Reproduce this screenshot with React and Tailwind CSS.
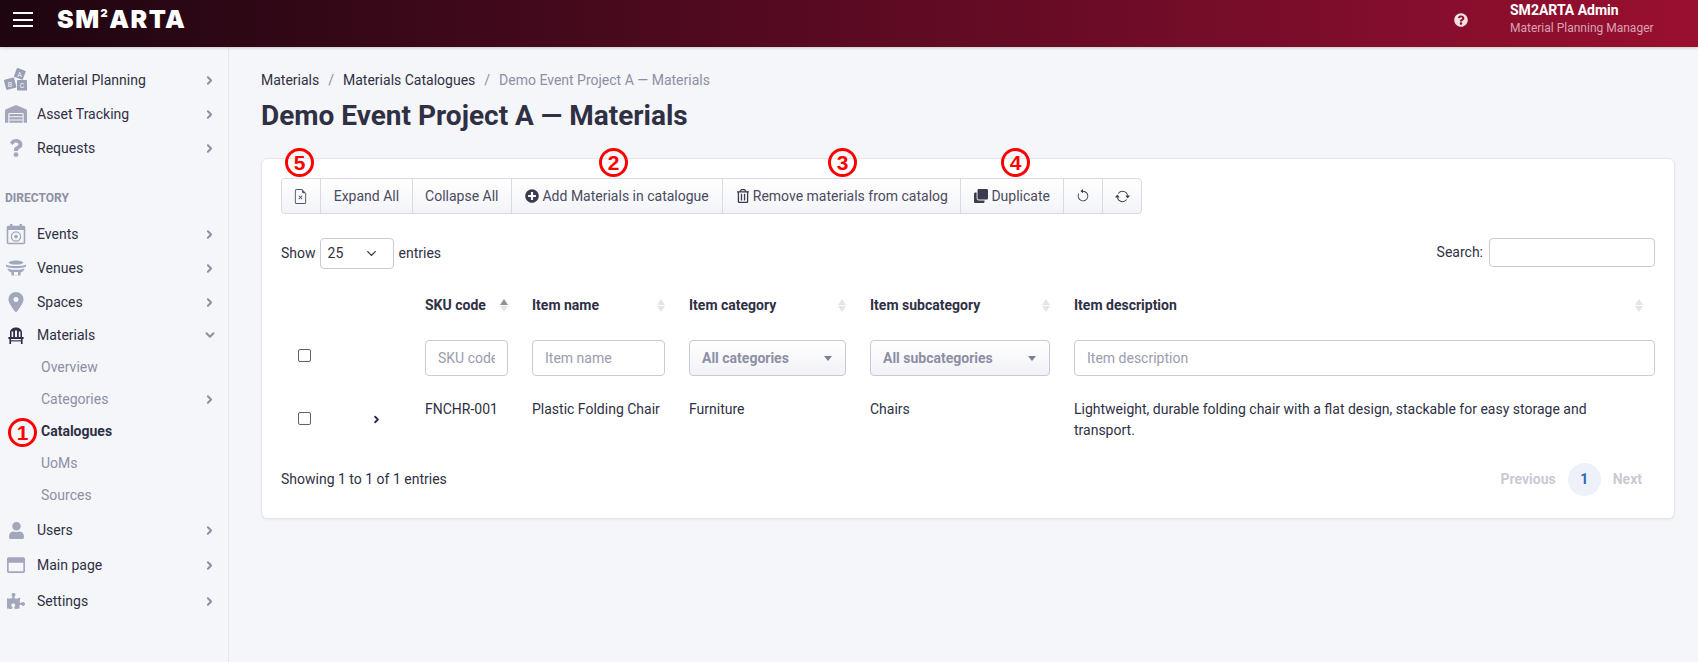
import React from "react";
import { ChevronRight, ChevronDown } from "lucide-react";
import { FaWarehouse, FaQuestion, FaUser, FaPuzzlePiece, FaRegWindowMaximize, FaPlusCircle, FaRegTrashAlt, FaClone, FaQuestionCircle } from "react-icons/fa";
import { FaLocationDot } from "react-icons/fa6";
import { BsFileEarmarkX, BsArrowCounterclockwise, BsArrowRepeat } from "react-icons/bs";

const BlocksIcon = () => (
  <svg width="24" height="24" viewBox="0 0 24 24">
    <g fill="#9b9fb4">
      <rect x="11" y="1" width="9.500" height="9.500" rx="1" transform="rotate(20 15.500 6)" />
      <rect x="1" y="10.500" width="10.500" height="10.500" rx="1" transform="rotate(-15 6 16)" />
      <rect x="13" y="12" width="10" height="10.500" rx="0.500" />
    </g>
    <g fill="#f5f6f9" fontSize="7" fontFamily="Roboto, sans-serif" textAnchor="middle">
      <text x="15.500" y="8.500">A</text>
      <text x="6" y="18.500">B</text>
      <text x="18" y="19.800">C</text>
    </g>
  </svg>
);

const CalendarIcon = () => (
  <svg width="20" height="22" viewBox="0 0 20 22" fill="none">
    <rect x="1.500" y="3.500" width="17" height="17" rx="1" stroke="#a3a7bb" strokeWidth="1.600" />
    <rect x="1" y="3" width="18" height="4" fill="#a3a7bb" />
    <rect x="4" y="1" width="2.400" height="4" fill="#a3a7bb" />
    <rect x="13.600" y="1" width="2.400" height="4" fill="#a3a7bb" />
    <circle cx="10" cy="13.500" r="4.600" stroke="#a3a7bb" strokeWidth="1.300" />
    <path d="M10 11.400l2 1.500-.8 2.300H8.800L8 12.900z" fill="#a3a7bb" />
  </svg>
);

const StadiumIcon = () => (
  <svg width="20" height="16" viewBox="0 0 20 16" fill="#a3a7bb">
    <ellipse cx="10" cy="2.600" rx="7.500" ry="2" />
    <path d="M0 4.500C3 6.600 17 6.600 20 4.500V6.600C17 8.800 3 8.800 0 6.600z" />
    <path d="M1.500 8.400C5 10.300 15 10.300 18.500 8.400C18 11 16 12 14.500 12.500V15.500H5.500V12.500C4 12 2 11 1.500 8.400z" />
    <rect x="8" y="12" width="4" height="3.500" fill="#f5f6f9" />
  </svg>
);

const ChairIcon = () => (
  <svg width="16" height="17" viewBox="0 0 16 17" fill="#2f3044">
    <path d="M2 10V5.500C2 2.500 4.800.5 8 .5s6 2 6 5V10h-1.600V4.600h-1.600V10H9V3.400H7V10H5.200V4.600H3.600V10z" />
    <rect x="0.300" y="10" width="15.400" height="2" rx="0.400" />
    <rect x="1.400" y="12" width="1.700" height="5" />
    <rect x="12.900" y="12" width="1.700" height="5" />
    <rect x="2.500" y="13.300" width="11" height="1.100" />
  </svg>
);

const Chev = () => <ChevronRight size={13} strokeWidth={3.6} className="text-[#8d8fa5]" />;

const Item = ({ icon, label, h = "h-[34px]", open }) => (
  <div className={`flex items-center ${h} text-[14px] text-[#2f3044]`}>
    <span className="w-[37px] shrink-0 flex justify-center pr-[5px]">{icon}</span>
    <span className="flex-1">{label}</span>
    <span className="w-[37px] flex justify-center">
      {open ? <ChevronDown size={14} strokeWidth={3.4} className="text-[#8d8fa5]" /> : <Chev />}
    </span>
  </div>
);

const Sub = ({ label, active, chev }) => (
  <div className={`flex items-center h-[32px] pl-[41px] text-[14px] ${active ? "font-bold text-[#2f3044]" : "text-[#8d8fa5]"}`}>
    <span className="flex-1">{label}</span>
    {chev && <span className="w-[37px] flex justify-center"><Chev /></span>}
  </div>
);

const Marker = ({ n, pos }) => (
  <span className={`absolute ${pos} w-[29px] h-[29px] rounded-full border-[3px] border-[#ff0000] flex items-center justify-center text-[#ff0000] text-[21px] font-bold font-['Liberation_Sans',sans-serif] leading-none`}>
    {n}
  </span>
);

const Btn = ({ w, children }) => (
  <div className={`${w} h-full flex items-center justify-center gap-[3px] border-r border-[#d8dbe6] last:border-r-0 text-[14px] text-[#4a4b5e]`}>
    {children}
  </div>
);

const Sort = ({ active }) => (
  <span className="flex flex-col gap-[1px] items-center shrink-0">
    <span className={`w-0 h-0 border-x-[4px] border-x-transparent border-b-[6px] ${active ? "border-b-[#8f91a3]" : "border-b-[#e3e4ea]"}`} />
    <span className="w-0 h-0 border-x-[4px] border-x-transparent border-t-[6px] border-t-[#e3e4ea]" />
  </span>
);

const Head = ({ label, active }) => (
  <th className="px-[12px] text-left font-bold text-[14px] text-[#2f3044] align-middle">
    <div className="flex items-center justify-between">
      <span>{label}</span>
      <Sort active={active} />
    </div>
  </th>
);

const FilterInput = ({ placeholder, last }) => (
  <td className={`pl-[12px] ${last ? "pr-0" : "pr-[12px]"} align-middle`}>
    <input
      placeholder={placeholder}
      className="w-full h-[36px] rounded-[4px] border border-[#c9c9dc] bg-white px-[12px] text-[14px] placeholder:text-[#9a9cae] outline-none"
    />
  </td>
);

const FilterSelect = ({ label }) => (
  <td className="px-[12px] align-middle">
    <div className="h-[36px] rounded-[4px] border border-[#c9c9dc] bg-gradient-to-b from-white to-[#f1f2f7] pl-[12px] pr-[13px] flex items-center justify-between text-[14px] font-bold text-[#8d8fa5]">
      <span>{label}</span>
      <span className="w-0 h-0 border-x-[4px] border-x-transparent border-t-[5px] border-t-[#7d7f93]" />
    </div>
  </td>
);

const Check = () => (
  <span className="block w-[13px] h-[13px] rounded-[2px] border border-[#5f6070] bg-white" />
);

export default function App() {
  return (
    <div className="relative min-h-[662px] bg-[#f5f6f9] font-['Roboto',sans-serif] text-[#2f3044] overflow-hidden">
      <header className="h-[47px] bg-gradient-to-r from-[#1e0510] via-[#5a0a22] to-[#9a0f30] flex items-start shadow-[0_1px_3px_rgba(0,0,0,0.2)] relative">
        <div className="ml-[13px] mt-[12px] w-[20px] h-[15px] flex flex-col justify-between">
          <span className="h-[2px] bg-white" />
          <span className="h-[2px] bg-white" />
          <span className="h-[2px] bg-white" />
        </div>
        <div className="ml-[24px] mt-[5px] text-white font-['Inter',sans-serif] font-black text-[25px] leading-[29px] tracking-[1.5px] flex items-start">
          <span>SM</span>
          <span className="text-[11px] leading-[14px] mt-[1px]">2</span>
          <span>ARTA</span>
        </div>
        <div className="ml-auto flex items-start">
          <FaQuestionCircle size={14} className="mt-[13px] text-[#f3dfe4]" />
          <div className="ml-[42px] mr-[30px] mt-[1px] w-[158px]">
            <div className="text-white font-bold text-[14px] leading-[18px]">SM2ARTA Admin</div>
            <div className="text-[#dba3b3] text-[12px] leading-[16px] mt-[1px]">Material Planning Manager</div>
          </div>
        </div>
      </header>

      <div className="flex">
        <aside className="w-[229px] shrink-0 min-h-[615px] border-r border-[#e6e8ee] pt-[16px]">
          <Item icon={<BlocksIcon />} label="Material Planning" />
          <Item icon={<FaWarehouse size={22} className="text-[#a3a7bb]" />} label="Asset Tracking" />
          <Item icon={<FaQuestion size={18} className="text-[#a3a7bb]" />} label="Requests" />
          <div className="h-[52px] pl-[5px] pt-[25px] text-[12px] leading-[16px] font-bold text-[#8d8fa5]">DIRECTORY</div>
          <Item icon={<CalendarIcon />} label="Events" />
          <Item icon={<StadiumIcon />} label="Venues" />
          <Item icon={<FaLocationDot size={20} className="text-[#a3a7bb]" />} label="Spaces" />
          <Item icon={<ChairIcon />} label="Materials" open h="h-[32px]" />
          <Sub label="Overview" />
          <Sub label="Categories" chev />
          <Sub label="Catalogues" active />
          <Sub label="UoMs" />
          <Sub label="Sources" />
          <div className="h-[2px]" />
          <Item icon={<FaUser size={17} className="text-[#a3a7bb]" />} label="Users" />
          <Item icon={<FaRegWindowMaximize size={18} className="text-[#a3a7bb]" />} label="Main page" h="h-[36px]" />
          <Item icon={<FaPuzzlePiece size={18} className="text-[#a3a7bb]" />} label="Settings" h="h-[36px]" />
        </aside>

        <main className="flex-1 min-w-0 pl-[32px] pr-[23px]">
          <nav className="mt-[23px] h-[20px] flex items-center text-[14px] leading-[20px]">
            <span>Materials</span>
            <span className="mx-[9px] text-[#8d8fa5]">/</span>
            <span>Materials Catalogues</span>
            <span className="mx-[9px] text-[#8d8fa5]">/</span>
            <span className="text-[#8d8fa5]">Demo Event Project A — Materials</span>
          </nav>
          <h1 className="mt-[8px] text-[28px] leading-[36px] font-bold text-[#2f3044]">Demo Event Project A — Materials</h1>

          <section className="mt-[24px] h-[361px] bg-white rounded-[6px] border border-[#e4e6ee] shadow-[0_1px_2px_rgba(0,0,0,0.05)] px-[19px] pt-[19px]">
            <div className="w-[861px] h-[36px] flex border border-[#d8dbe6] rounded-[4px] bg-gradient-to-b from-white to-[#f3f4f8]">
              <Btn w="w-[39px]"><BsFileEarmarkX size={15} className="text-[#55566a]" /></Btn>
              <Btn w="w-[92px]">Expand All</Btn>
              <Btn w="w-[99px]">Collapse All</Btn>
              <Btn w="w-[212px]"><FaPlusCircle size={14} className="text-[#3a3b4d]" />Add Materials in catalogue</Btn>
              <Btn w="w-[238px]"><FaRegTrashAlt size={14} className="text-[#3a3b4d]" />Remove materials from catalog</Btn>
              <Btn w="w-[103px]"><FaClone size={14} className="text-[#3a3b4d]" />Duplicate</Btn>
              <Btn w="w-[39px]"><BsArrowCounterclockwise size={14} className="text-[#3a3b4d]" /></Btn>
              <Btn w="w-[38px]"><BsArrowRepeat size={15} className="text-[#3a3b4d]" /></Btn>
            </div>

            <div className="mt-[24px] h-[31px] flex items-start justify-between text-[14px]">
              <div className="flex items-center h-[31px] gap-[5px]">
                <span className="mr-[-1px]">Show</span>
                <div className="w-[74px] h-[31px] rounded-[4px] border border-[#c9c9dc] flex items-center justify-between pl-[7px] pr-[14px]">
                  <span>25</span>
                  <ChevronDown size={15} strokeWidth={2} />
                </div>
                <span>entries</span>
              </div>
              <div className="flex items-center gap-[6px]">
                <span>Search:</span>
                <input className="w-[166px] h-[29px] rounded-[4px] border border-[#c9c9dc] bg-white outline-none" />
              </div>
            </div>

            <table className="mt-[16px] w-full table-fixed border-collapse">
              <colgroup>
                <col className="w-[60px]" />
                <col className="w-[72px]" />
                <col className="w-[107px]" />
                <col className="w-[157px]" />
                <col className="w-[181px]" />
                <col className="w-[204px]" />
                <col />
              </colgroup>
              <thead>
                <tr className="h-[40px]">
                  <th />
                  <th />
                  <Head label="SKU code" active />
                  <Head label="Item name" />
                  <Head label="Item category" />
                  <Head label="Item subcategory" />
                  <Head label="Item description" />
                </tr>
                <tr className="h-[66px]">
                  <td className="pl-[17px] pb-[5px] align-middle"><Check /></td>
                  <td />
                  <FilterInput placeholder="SKU code" />
                  <FilterInput placeholder="Item name" />
                  <FilterSelect label="All categories" />
                  <FilterSelect label="All subcategories" />
                  <FilterInput placeholder="Item description" last />
                </tr>
              </thead>
              <tbody>
                <tr className="text-[14px] leading-[21px] align-top">
                  <td className="pl-[17px] pt-[21px]"><Check /></td>
                  <td className="pl-[30px] pt-[23px]"><ChevronRight size={11} strokeWidth={4} className="text-[#2f3044]" /></td>
                  <td className="px-[12px] pt-[8px] pb-[10px]">FNCHR-001</td>
                  <td className="px-[12px] pt-[8px] pb-[10px] whitespace-nowrap">Plastic Folding Chair</td>
                  <td className="px-[12px] pt-[8px] pb-[10px]">Furniture</td>
                  <td className="px-[12px] pt-[8px] pb-[10px]">Chairs</td>
                  <td className="pl-[12px] pt-[8px] pb-[10px]">Lightweight, durable folding chair with a flat design, stackable for easy storage and<br />transport.</td>
                </tr>
              </tbody>
            </table>

            <div className="mt-[11px] h-[34px] flex items-center justify-between text-[14px]">
              <span>Showing 1 to 1 of 1 entries</span>
              <div className="flex items-center font-bold text-[#c9cad4] pr-[13px]">
                <span>Previous</span>
                <span className="ml-[12px] w-[33px] h-[33px] rounded-full bg-[#eef1f9] text-[#2f66b3] flex items-center justify-center">1</span>
                <span className="ml-[12px]">Next</span>
              </div>
            </div>
          </section>
        </main>
      </div>

      <Marker n="1" pos="left-[8px] top-[418px]" />
      <Marker n="5" pos="left-[285px] top-[148px]" />
      <Marker n="2" pos="left-[599px] top-[148px]" />
      <Marker n="3" pos="left-[828px] top-[148px]" />
      <Marker n="4" pos="left-[1001px] top-[148px]" />
    </div>
  );
}
